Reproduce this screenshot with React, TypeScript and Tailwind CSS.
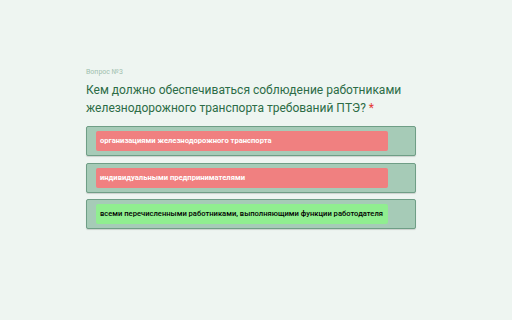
const answers = [
  { text: "организациями железнодорожного транспорта", correct: false },
  { text: "индивидуальными предпринимателями", correct: false },
  { text: "всеми перечисленными работниками, выполняющими функции работодателя", correct: true },
];

export default function App() {
  return (
    <div className="w-[512px] h-[320px] bg-[#eef5f1] font-['Roboto',sans-serif] pt-[67px] pl-[86px]">
      <div className="w-[330px]">
        <div className="text-[7px] leading-[10px] text-[#9fbfae]">Вопрос №3</div>
        <h1 className="mt-[4px] text-[12px] leading-[18px] text-[#2c6c46]">
          Кем должно обеспечиваться соблюдение работниками железнодорожного транспорта требований ПТЭ?{" "}
          <span className="text-[#e53935]">*</span>
        </h1>
        <div className="mt-[9px] flex flex-col gap-[6.5px]">
          {answers.map((a) => (
            <div
              key={a.text}
              className="h-[30px] bg-[#a6cbb7] border border-[#6f9e86] rounded-[2px] pl-[9px] pt-[4px] shadow-[0_1px_1px_rgba(0,0,0,0.15)]"
            >
              <div
                className={
                  a.correct
                    ? "w-[292px] h-[20px] rounded-[2px] bg-[#90ee90] text-black text-[7.6px] font-medium leading-[20px] px-[4px] whitespace-nowrap"
                    : "w-[292px] h-[20px] rounded-[2px] bg-[#f08080] text-white text-[7.6px] font-bold leading-[20px] px-[4px] whitespace-nowrap"
                }
              >
                {a.text}
              </div>
            </div>
          ))}
        </div>
      </div>
    </div>
  );
}
